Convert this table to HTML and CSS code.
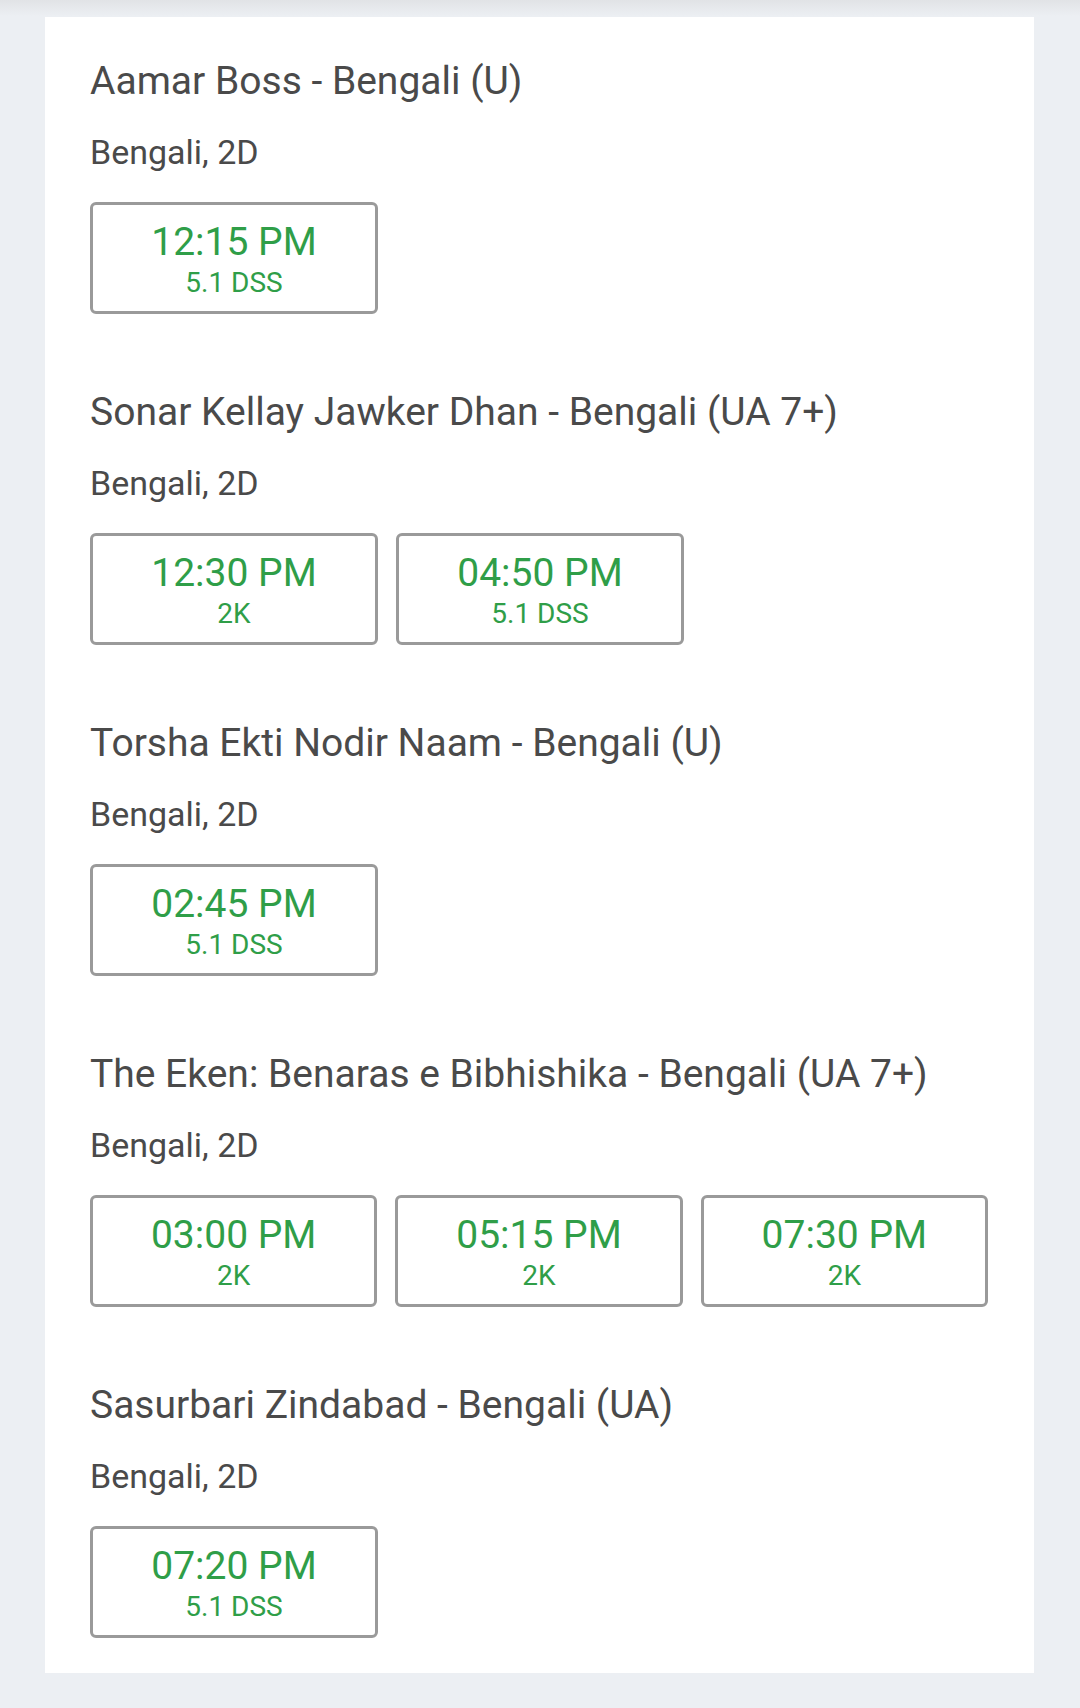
FILE: index.html
```html
<!DOCTYPE html>
<html>
<head>
<meta charset="utf-8">
<link rel="stylesheet" href="styles.css">
</head>
<body>
<div class="topshade"></div>
<main class="card">
  <section class="movie">
    <h2 class="title">Aamar Boss - Bengali (U)</h2>
    <p class="meta">Bengali, 2D</p>
    <div class="times">
      <div class="slot"><span class="time">12:15 PM</span><span class="fmt">5.1 DSS</span></div>
    </div>
  </section>
  <section class="movie">
    <h2 class="title">Sonar Kellay Jawker Dhan - Bengali (UA 7+)</h2>
    <p class="meta">Bengali, 2D</p>
    <div class="times">
      <div class="slot"><span class="time">12:30 PM</span><span class="fmt">2K</span></div>
      <div class="slot"><span class="time">04:50 PM</span><span class="fmt">5.1 DSS</span></div>
    </div>
  </section>
  <section class="movie">
    <h2 class="title">Torsha Ekti Nodir Naam - Bengali (U)</h2>
    <p class="meta">Bengali, 2D</p>
    <div class="times">
      <div class="slot"><span class="time">02:45 PM</span><span class="fmt">5.1 DSS</span></div>
    </div>
  </section>
  <section class="movie">
    <h2 class="title">The Eken: Benaras e Bibhishika - Bengali (UA 7+)</h2>
    <p class="meta">Bengali, 2D</p>
    <div class="times">
      <div class="slot"><span class="time">03:00 PM</span><span class="fmt">2K</span></div>
      <div class="slot"><span class="time">05:15 PM</span><span class="fmt">2K</span></div>
      <div class="slot"><span class="time">07:30 PM</span><span class="fmt">2K</span></div>
    </div>
  </section>
  <section class="movie">
    <h2 class="title">Sasurbari Zindabad - Bengali (UA)</h2>
    <p class="meta">Bengali, 2D</p>
    <div class="times">
      <div class="slot"><span class="time">07:20 PM</span><span class="fmt">5.1 DSS</span></div>
    </div>
  </section>
</main>
</body>
</html>
```
FILE: styles.css
```css
* { box-sizing: border-box; }
html, body {
  margin: 0;
  padding: 0;
  background: #eceff3;
  font-family: Roboto, "Noto Sans", sans-serif;
}
body {
  width: 1080px;
  height: 1708px;
  padding-top: 17px;
  position: relative;
}
.topshade {
  position: absolute;
  left: 0; right: 0; top: 0;
  height: 16px;
  background: linear-gradient(#e1e3e6, #eceff3);
}
.card {
  position: relative;
  margin: 0 46px 0 45px;
  background: #ffffff;
  padding: 40px 46px 35px 45px;
}
.movie {
  height: 331px;
}
.movie:last-child { height: auto; }
.title {
  margin: 0;
  font-weight: 400;
  font-size: 39px;
  line-height: 48px;
  color: #4a4a4a;
}
.meta {
  margin: 27px 0 0 0;
  font-size: 34px;
  line-height: 40px;
  color: #4a4a4a;
}
.times {
  display: flex;
  gap: 18px;
  margin-top: 30px;
}
.slot {
  width: 288px;
  height: 112px;
  border: 3px solid #9a9a9a;
  border-radius: 6px;
  padding-top: 3px;
  display: flex;
  flex-direction: column;
  align-items: center;
  justify-content: center;
  color: #2f9e48;
}
.time {
  font-size: 39px;
  line-height: 42px;
}
.fmt {
  margin-top: 4px;
  font-size: 28px;
  line-height: 32px;
}
```
